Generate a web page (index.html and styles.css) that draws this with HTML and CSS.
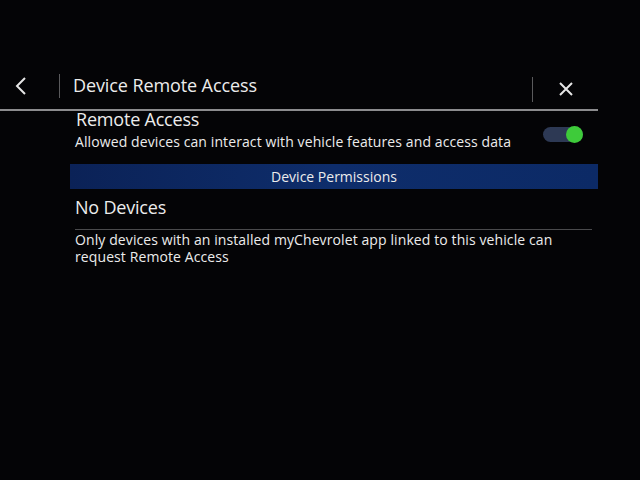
FILE: index.html
```html
<!DOCTYPE html>
<html>
<head>
<meta charset="utf-8">
<link rel="stylesheet" href="styles.css">
</head>
<body>
<div class="screen">
  <div class="header">
    <div class="back">
      <svg width="14" height="20" viewBox="0 0 14 20"><path d="M11 2 L3 10 L11 18" fill="none" stroke="#e6e6e6" stroke-width="2"/></svg>
    </div>
    <div class="vdiv"></div>
    <div class="title">Device Remote Access</div>
    <div class="vdiv right"></div>
    <div class="close">
      <svg width="16" height="16" viewBox="0 0 16 16"><path d="M2 2 L14 14 M14 2 L2 14" fill="none" stroke="#e6e6e6" stroke-width="2"/></svg>
    </div>
  </div>
  <div class="content">
    <div class="row">
      <div class="texts">
        <div class="h2">Remote Access</div>
        <div class="sub">Allowed devices can interact with vehicle features and access data</div>
      </div>
      <div class="toggle"><div class="knob"></div></div>
    </div>
    <div class="bar">Device Permissions</div>
    <div class="h2 nodev">No Devices</div>
    <div class="info">Only devices with an installed myChevrolet app linked to this vehicle can request Remote Access</div>
  </div>
</div>
</body>
</html>
```
FILE: styles.css
```css
html, body {
  margin: 0;
  padding: 0;
  background: #040406;
  width: 640px;
  height: 480px;
  overflow: hidden;
}
.screen {
  font-family: "Open Sans", "Noto Sans", sans-serif;
  color: #ececec;
  display: flex;
  flex-direction: column;
}
.header {
  margin-top: 74px;
  width: 598px;
  height: 37px;
  box-sizing: border-box;
  padding-bottom: 12px;
  display: flex;
  align-items: center;
  border-bottom: 2px solid #8c8c8e;
}
.back {
  width: 59px;
  box-sizing: border-box;
  padding-left: 14px;
  display: flex;
  align-items: center;
}
.vdiv {
  width: 1px;
  height: 24px;
  background: #5a5a5c;
}
.vdiv.right {
  height: 25px;
  margin-top: 8px;
}
.title {
  flex: 1;
  margin-left: 13px;
  font-size: 18px;
  letter-spacing: -0.1px;
  margin-top: -1px;
}
.close {
  width: 65px;
  display: flex;
  justify-content: center;
  padding-top: 7px;
}
.content {
  display: flex;
  flex-direction: column;
}
.row {
  display: flex;
  align-items: flex-start;
  width: 598px;
}
.texts {
  flex: 1;
  padding-left: 76px;
  margin-top: -3px;
}
.h2 {
  font-size: 18px;
  line-height: 22px;
  letter-spacing: -0.2px;
}
.sub {
  font-size: 14px;
  line-height: 20px;
  margin-top: 2px;
  margin-left: -1px;
  letter-spacing: 0.1px;
}
.toggle {
  margin-top: 16px;
  margin-right: 15px;
  width: 40px;
  height: 15px;
  border-radius: 8px;
  background: #2d3954;
  position: relative;
}
.knob {
  position: absolute;
  right: 0;
  top: -1px;
  width: 17px;
  height: 17px;
  border-radius: 50%;
  background: #3ecb3a;
}
.bar {
  margin-top: 12px;
  margin-left: 70px;
  width: 528px;
  height: 25px;
  line-height: 25px;
  text-align: center;
  font-size: 14px;
  letter-spacing: 0px;
  background: linear-gradient(90deg, #0b2257, #0e2d6b 50%, #0c2a66);
}
.nodev {
  margin-top: 7px;
  margin-left: 75px;
  width: 517px;
  padding-bottom: 11px;
  border-bottom: 1px solid #4a4a4c;
}
.info {
  margin-left: 75px;
  width: 500px;
  font-size: 14px;
  line-height: 17px;
  letter-spacing: 0.1px;
  margin-top: 1px;
}
```
